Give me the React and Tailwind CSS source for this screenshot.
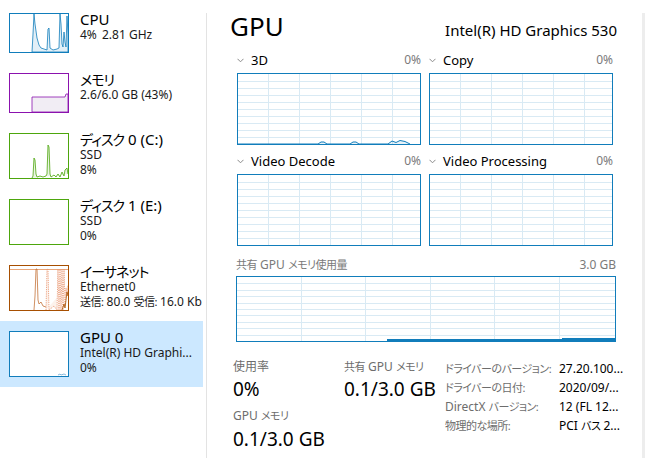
import React from 'react';

const GRID = '#d9eaf4';
const BLUE = '#117dbb';

function Chevron() {
  return (
    <svg width="7" height="5" viewBox="0 0 7 5" className="mr-[7px] shrink-0">
      <polyline points="0.5,0.8 3.5,3.8 6.5,0.8" fill="none" stroke="#8a8a8a" strokeWidth="1" />
    </svg>
  );
}

// grid + optional data drawn inside a bordered box
function GridChart({ w, h, step, rows, children }) {
  const iw = w - 2;
  const ih = h - 2;
  const vx = [];
  for (let x = step - 1; x < iw; x += step) vx.push(Math.round(x) + 0.5);
  const hy = [];
  for (let i = 1; i < rows; i++) hy.push(Math.round((ih / rows) * i) + 0.5);
  return (
    <svg width={iw} height={ih} className="block">
      {vx.map((x) => (
        <line key={'v' + x} x1={x} y1="0" x2={x} y2={ih} stroke={GRID} strokeWidth="1" />
      ))}
      {hy.map((y) => (
        <line key={'h' + y} x1="0" y1={y} x2={iw} y2={y} stroke={GRID} strokeWidth="1" />
      ))}
      {children}
    </svg>
  );
}

function EngineChart({ label, children }) {
  return (
    <div className="w-[184px]">
      <div className="flex items-center h-[16px] leading-[16px]">
        <Chevron />
        <span className="text-[13px] text-black">{label}</span>
        <span className="ml-auto text-[12px] text-[#7a7a7a]">0%</span>
      </div>
      <div className="mt-[5px] w-[184px] h-[72px] border border-[#117dbb]">
        <GridChart w={184} h={72} step={31} rows={10}>
          {children}
        </GridChart>
      </div>
    </div>
  );
}

function Thumb({ tall, border, children }) {
  return (
    <div className={`shrink-0 w-[60px] bg-white border ${tall ? 'h-[46px]' : 'h-[40px]'} ${border}`}>
      <svg width="58" height={tall ? 44 : 38} className="block">
        {children}
      </svg>
    </div>
  );
}

// kana-heavy text: the CJK face runs wider than the original UI font
function Jt({ children }) {
  return <span className="text-[14px] tracking-[-1px]">{children}</span>;
}

function Js({ children }) {
  return <span className="text-[11px] tracking-[-0.5px]">{children}</span>;
}

function SideItem({ title, lines, tall, selected, border, children }) {
  return (
    <div className={`flex items-start py-[10px] pl-[9px] ${selected ? 'bg-[#cce8ff]' : ''}`}>
      <Thumb tall={tall} border={border}>
        {children}
      </Thumb>
      <div className="ml-[11px] -mt-[2px] whitespace-nowrap">
        <div className="text-[15px] h-[16px] leading-[16px] text-black">{title}</div>
        {lines.map((l, i) => (
          <div key={i} className="text-[12px] h-[15px] leading-[15px] text-[#1a1a1a]">
            {l}
          </div>
        ))}
      </div>
    </div>
  );
}

export default function App() {
  return (
    <div className="w-[645px] h-[458px] bg-white overflow-hidden flex font-['Noto_Sans','Noto_Sans_CJK_JP',sans-serif] [font-feature-settings:'palt'] text-black">
      {/* sidebar */}
      <div className="w-[203px] shrink-0 pt-[3px]">
        <SideItem
          title="CPU"
          lines={[<>4% <span className="ml-[2px]">2.81 GHz</span></>]}
          border="border-[#117dbb]"
        >
          <polygon
            points="22,38 23,20 24,0 25,10 27,24 29,31 31,34 34,35 37,36 38,15 39,14 40,34 43,36 47,35 49,34 50,0 51,10 52,30 53,33 54,18 55,28 56,33 57,2 58,20 58,38"
            fill="rgba(17,125,187,0.12)"
            stroke="#117dbb"
            strokeWidth="0.8"
          />
        </SideItem>
        <SideItem title={<Jt>メモリ</Jt>} lines={['2.6/6.0 GB (43%)']} border="border-[#8b12ae]">
          <polygon points="22,38 22,23 55,23 56,20 58,20 58,38" fill="#f1edf4" stroke="#8b12ae" strokeWidth="0.8" />
        </SideItem>
        <SideItem title={<><Jt>ディスク</Jt> 0 (C:)</>} lines={['SSD', '8%']} tall border="border-[#4da60c]">
          <polyline
            points="22,44 23,42 24,24 25,26 26,40 27,43 30,42 33,43 36,42 37,40 38,11 39,13 40,40 41,43 44,41 46,43 48,40 50,43 52,38 54,42 55,36 57,34 58,40"
            fill="rgba(77,166,12,0.12)"
            stroke="#4da60c"
            strokeWidth="0.8"
          />
        </SideItem>
        <SideItem title={<><Jt>ディスク</Jt> 1 (E:)</>} lines={['SSD', '0%']} tall border="border-[#4da60c]" />
        <SideItem
          title={<Jt>イーサネット</Jt>}
          lines={['Ethernet0', <><Js>送信:</Js> 80.0 <Js>受信:</Js> 16.0 Kb</>]}
          tall
          border="border-[#a74f01]"
        >
          <line x1="0" y1="3.5" x2="58" y2="3.5" stroke="#e9a77a" strokeWidth="1" />
          <polyline
            points="24,44 25,30 26,3 27,3 28,34 29,38 31,36 33,40 36,41"
            fill="none"
            stroke="#c4743a"
            strokeWidth="0.8"
          />
          <polyline
            points="36,44 37,3 38,3 39,44 44,40 47,44 48,3 49,44 50,3 51,44 52,3 53,44 54,3 55,40 56,22 57,30 58,19"
            fill="rgba(233,150,100,0.12)"
            stroke="#e9906a"
            strokeWidth="0.8"
            strokeDasharray="1.2 1"
          />
          <polyline points="52,44 54,38 55,42 57,26 58,30" fill="none" stroke="#a74f01" strokeWidth="0.8" />
        </SideItem>
        <SideItem
          title="GPU 0"
          lines={['Intel(R) HD Graphi...', '0%']}
          tall
          selected
          border="border-[#117dbb]"
        >
          <polyline points="48,43 50,42 51,43 54,42 56,43" fill="none" stroke="#6aaad4" strokeWidth="0.8" />
        </SideItem>
      </div>

      {/* divider */}
      <div className="w-[3px] shrink-0" />
      <div className="w-px shrink-0 mt-[13px] bg-[#e3e3e3]" />

      {/* main */}
      <div className="flex-1 pl-[23px] pt-[10px]">
        <div className="w-[387px] flex items-baseline">
          <span className="text-[26px] leading-[32px]">GPU</span>
          <span className="ml-auto text-[15px]">Intel(R) HD Graphics 530</span>
        </div>

        <div className="ml-[7px] mt-[10px] w-[377px] flex flex-wrap gap-x-[8px]">
          <EngineChart label="3D">
            <polyline
              points="0,70 80,70 83,68 86,68 89,70 112,70 115,68 118,68 121,70 150,70 154,67 158,68.5 162,66.5 167,67.5 172,70"
              fill="rgba(17,125,187,0.1)"
              stroke={BLUE}
              strokeWidth="1"
            />
          </EngineChart>
          <EngineChart label="Copy" />
          <div className="mt-[8px]">
            <EngineChart label="Video Decode" />
          </div>
          <div className="mt-[8px]">
            <EngineChart label="Video Processing" />
          </div>
        </div>

        <div className="ml-[6px] mt-[11px] w-[380px]">
          <div className="flex h-[16px] leading-[16px] text-[12px] text-[#7a7a7a] whitespace-nowrap">
            <span>
              <Js>共有</Js> GPU <Js>メモリ使用量</Js>
            </span>
            <span className="ml-auto">3.0 GB</span>
          </div>
          <div className="mt-[3px] w-[380px] h-[66px] border border-[#117dbb]">
            <GridChart w={380} h={66} step={64.5} rows={10}>
              <rect x="150" y="62" width="228" height="2" fill={BLUE} />
              <polyline points="325,61.5 378,61.5" fill="none" stroke={BLUE} strokeWidth="1" />
            </GridChart>
          </div>
        </div>

        <div className="flex items-start ml-[3px]">
          <div className="w-[212px] mt-[17px] grid grid-cols-[111px_101px]">
            <div>
              <div className="text-[12px] h-[16px] leading-[16px] text-[#6d6d6d]">使用率</div>
              <div className="mt-[2px] text-[19px] leading-[24px]">0%</div>
            </div>
            <div>
              <div className="text-[12px] h-[16px] leading-[16px] text-[#6d6d6d] whitespace-nowrap">
                <Js>共有</Js> GPU <Js>メモリ</Js>
              </div>
              <div className="mt-[2px] text-[19px] leading-[24px] whitespace-nowrap">0.1/3.0 GB</div>
            </div>
            <div className="mt-[7px]">
              <div className="text-[12px] h-[16px] leading-[16px] text-[#6d6d6d] whitespace-nowrap">
                GPU <Js>メモリ</Js>
              </div>
              <div className="mt-[3px] text-[19px] leading-[24px] whitespace-nowrap">0.1/3.0 GB</div>
            </div>
          </div>
          <div className="mt-[17px] text-[12px] grid grid-cols-[114px_auto] auto-rows-[19px] leading-[19px] whitespace-nowrap">
            <span className="text-[#6d6d6d]"><Js>ドライバーのバージョン:</Js></span>
            <span>27.20.100...</span>
            <span className="text-[#6d6d6d]"><Js>ドライバーの日付:</Js></span>
            <span>2020/09/...</span>
            <span className="text-[#6d6d6d]">DirectX <Js>バージョン:</Js></span>
            <span>12 (FL 12...</span>
            <span className="text-[#6d6d6d]"><Js>物理的な場所:</Js></span>
            <span>PCI <Js>バス</Js> 2...</span>
          </div>
        </div>
      </div>

      {/* right edge strip */}
      <div className="w-[3px] shrink-0 mt-[13px] bg-[#ededed]" />
    </div>
  );
}
